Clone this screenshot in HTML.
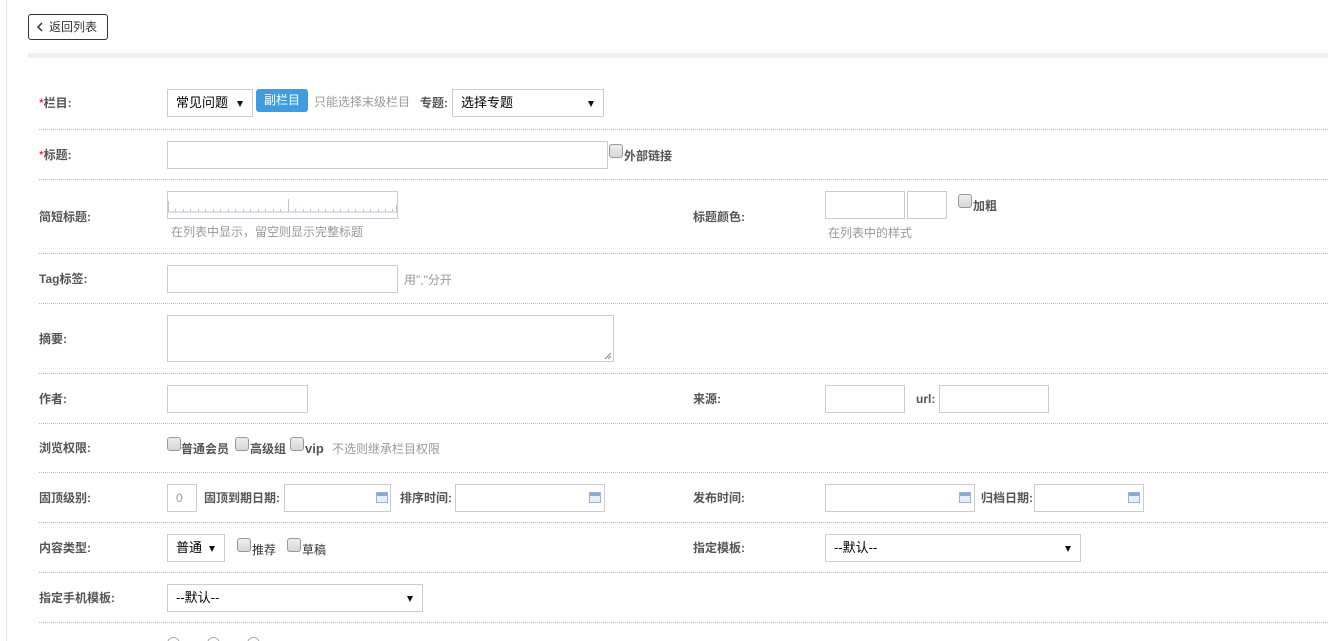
<!DOCTYPE html>
<html style="height:641px;overflow:hidden"><head><meta charset="utf-8"><style>
*{box-sizing:border-box;margin:0;padding:0}
html,body{overflow:hidden}
body{width:1328px;height:641px;overflow:hidden;background:#fff;position:relative;font-family:"Liberation Sans","Noto Sans CJK SC",sans-serif;font-size:12px;color:#333}
.a{position:absolute;white-space:nowrap}
.l{position:absolute;font-weight:bold;color:#555;font-size:12px;line-height:14px;white-space:nowrap}
.l b{color:#e00;font-weight:normal}
.in{position:absolute;border:1px solid #ccc;background:#fff}
.sel{position:absolute;border:1px solid #ccc;background:#fff;font-size:13px;color:#000;padding-left:8px;line-height:26px}
.sel:after{content:"";position:absolute;right:9px;top:11px;border-left:3.5px solid transparent;border-right:3.5px solid transparent;border-top:6px solid #111}
.sep{position:absolute;left:39px;right:0;border-top:1px dotted #bbb;height:0}
.cb{position:absolute;width:14px;height:14px;border:1px solid #999;border-radius:3px;background:linear-gradient(#eee,#d6d6d6)}
.h{position:absolute;color:#999;font-size:12px;white-space:nowrap;line-height:14px}
.t{position:absolute;font-weight:bold;color:#555;font-size:12px;white-space:nowrap;line-height:14px}
.cal{position:absolute;width:12px;height:11px;background:linear-gradient(#8aa9d6 0 3px,#e6eef8 3px);border:1px solid #9bb3d6}
</style></head><body>
<div class="a" style="left:6px;top:0;width:1px;height:641px;background:#dbe9f5"></div>
<div class="a" style="left:28px;top:14px;width:80px;height:26px;border:1px solid #333;border-radius:3px;line-height:24px;padding-left:20px;font-size:12px;color:#333">返回列表</div>
<svg class="a" style="left:36px;top:22px" width="8" height="10"><path d="M6 1 L2 5 L6 9" fill="none" stroke="#333" stroke-width="1.5"/></svg>
<div class="a" style="left:28px;top:53px;width:1300px;height:5px;background:#efefef"></div>

<div class="l" style="left:39px;top:96px"><b>*</b>栏目:</div>
<div class="sel" style="left:167px;top:89px;width:86px;height:28px">常见问题</div>
<div class="a" style="left:256px;top:89px;width:52px;height:23px;background:#3e9de0;border-radius:3px;color:#fff;text-align:center;line-height:23px;font-size:12px">副栏目</div>
<div class="h" style="left:314px;top:95px">只能选择末级栏目</div>
<div class="l" style="left:420px;top:96px">专题:</div>
<div class="sel" style="left:452px;top:89px;width:152px;height:28px">选择专题</div>
<div class="sep" style="top:129px"></div>

<div class="l" style="left:39px;top:148px"><b>*</b>标题:</div>
<div class="in" style="left:167px;top:141px;width:441px;height:28px"></div>
<div class="cb" style="left:609px;top:144px"></div>
<div class="t" style="left:624px;top:149px">外部链接</div>
<div class="sep" style="top:179px"></div>

<div class="l" style="left:39px;top:210px">简短标题:</div>
<div class="in" style="left:167px;top:191px;width:231px;height:28px;border-color:#ccc"></div>
<svg class="a" style="left:168px;top:199px" width="229" height="14"><g stroke="#b8c4e0" stroke-width="1"><line x1="0" y1="13" x2="229" y2="13"/><line x1="0.5" y1="2" x2="0.5" y2="13"/><line x1="120.5" y1="0" x2="120.5" y2="13"/><line x1="228.5" y1="6" x2="228.5" y2="13"/></g><g stroke="#b8c4e0"><path d="M7.5 10v3M15.5 10v3M22.5 10v3M30.5 10v3M37.5 10v3M45.5 10v3M52.5 10v3M60.5 10v3M67.5 10v3M75.5 10v3M82.5 10v3M90.5 10v3M97.5 10v3M105.5 10v3M112.5 10v3M127.5 10v3M135.5 10v3M142.5 10v3M150.5 10v3M157.5 10v3M165.5 10v3M172.5 10v3M180.5 10v3M187.5 10v3M195.5 10v3M202.5 10v3M210.5 10v3M217.5 10v3M224.5 10v3"/></g></svg>
<div class="h" style="left:171px;top:225px">在列表中显示，留空则显示完整标题</div>
<div class="l" style="left:693px;top:210px">标题颜色:</div>
<div class="in" style="left:825px;top:191px;width:80px;height:28px"></div>
<div class="in" style="left:907px;top:191px;width:40px;height:28px"></div>
<div class="cb" style="left:958px;top:194px"></div>
<div class="t" style="left:973px;top:199px">加粗</div>
<div class="h" style="left:828px;top:226px">在列表中的样式</div>
<div class="sep" style="top:253px"></div>

<div class="l" style="left:39px;top:272px">Tag标签:</div>
<div class="in" style="left:167px;top:265px;width:231px;height:28px"></div>
<div class="h" style="left:404px;top:273px">用","分开</div>
<div class="sep" style="top:303px"></div>

<div class="l" style="left:39px;top:332px">摘要:</div>
<div class="in" style="left:167px;top:315px;width:447px;height:47px"></div>
<svg class="a" style="left:604px;top:352px" width="8" height="8"><path d="M7 1L1 7M7 4L4 7" stroke="#888"/></svg>
<div class="sep" style="top:373px"></div>

<div class="l" style="left:39px;top:392px">作者:</div>
<div class="in" style="left:167px;top:385px;width:141px;height:28px"></div>
<div class="l" style="left:693px;top:392px">来源:</div>
<div class="in" style="left:825px;top:385px;width:80px;height:28px"></div>
<div class="l" style="left:916px;top:392px">url:</div>
<div class="in" style="left:939px;top:385px;width:110px;height:28px"></div>
<div class="sep" style="top:423px"></div>

<div class="l" style="left:39px;top:441px">浏览权限:</div>
<div class="cb" style="left:167px;top:437px"></div><div class="t" style="left:181px;top:442px">普通会员</div>
<div class="cb" style="left:235px;top:437px"></div><div class="t" style="left:250px;top:442px">高级组</div>
<div class="cb" style="left:290px;top:437px"></div><div class="t" style="left:305px;top:442px;font-size:13px">vip</div>
<div class="h" style="left:332px;top:442px">不选则继承栏目权限</div>
<div class="sep" style="top:472px"></div>

<div class="l" style="left:39px;top:491px">固顶级别:</div>
<div class="in" style="left:167px;top:484px;width:30px;height:28px;color:#999;padding-left:8px;line-height:26px">0</div>
<div class="l" style="left:204px;top:491px">固顶到期日期:</div>
<div class="in" style="left:284px;top:484px;width:107px;height:28px"></div><div class="cal" style="left:376px;top:492px"></div>
<div class="l" style="left:400px;top:491px">排序时间:</div>
<div class="in" style="left:455px;top:484px;width:150px;height:28px"></div><div class="cal" style="left:589px;top:492px"></div>
<div class="l" style="left:693px;top:491px">发布时间:</div>
<div class="in" style="left:825px;top:484px;width:150px;height:28px"></div><div class="cal" style="left:959px;top:492px"></div>
<div class="l" style="left:981px;top:491px">归档日期:</div>
<div class="in" style="left:1034px;top:484px;width:110px;height:28px"></div><div class="cal" style="left:1128px;top:492px"></div>
<div class="sep" style="top:522px"></div>

<div class="l" style="left:39px;top:541px">内容类型:</div>
<div class="sel" style="left:167px;top:534px;width:58px;height:28px">普通</div>
<div class="cb" style="left:237px;top:538px"></div><div class="t" style="left:252px;top:543px;font-weight:normal;color:#333">推荐</div>
<div class="cb" style="left:287px;top:538px"></div><div class="t" style="left:302px;top:543px;font-weight:normal;color:#333">草稿</div>
<div class="l" style="left:693px;top:541px">指定模板:</div>
<div class="sel" style="left:825px;top:534px;width:256px;height:28px">--默认--</div>
<div class="sep" style="top:572px"></div>

<div class="l" style="left:39px;top:591px">指定手机模板:</div>
<div class="sel" style="left:167px;top:584px;width:256px;height:28px">--默认--</div>
<div class="sep" style="top:622px"></div>
<div class="a" style="left:167px;top:637px;width:13px;height:4px;overflow:hidden"><div style="width:13px;height:13px;border:1px solid #aaa;border-radius:50%"></div></div>
<div class="a" style="left:207px;top:637px;width:13px;height:4px;overflow:hidden"><div style="width:13px;height:13px;border:1px solid #aaa;border-radius:50%"></div></div>
<div class="a" style="left:247px;top:637px;width:13px;height:4px;overflow:hidden"><div style="width:13px;height:13px;border:1px solid #aaa;border-radius:50%"></div></div>
</body></html>
